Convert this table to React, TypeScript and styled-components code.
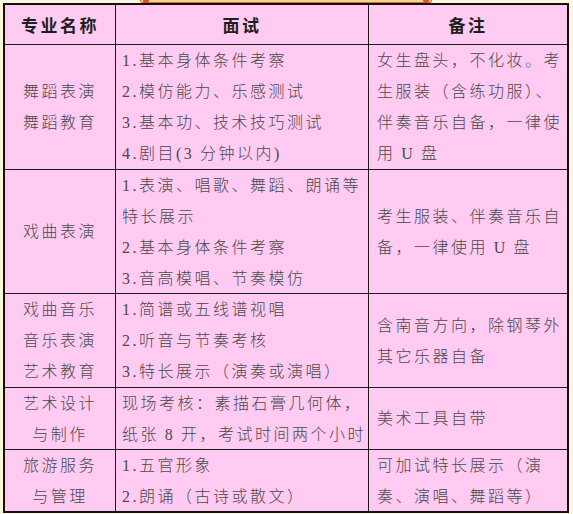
import React, { FC } from 'react'
import styled, { createGlobalStyle } from 'styled-components'

const GlobalStyle = createGlobalStyle`
  html, body {
    margin: 0;
    padding: 0;
    background: #fef7de;
  }
`

const Page = styled.div`
  padding: 0 0 0 3px;
  width: 566px;
`

const Banner = styled.div`
  position: relative;
  margin-left: 137px;
  width: 290px;
  height: 2px;
  background: #fbd391;
  border-bottom: 1px solid #c4732a;
  border-left: 1px solid #c4732a;
  border-right: 1px solid #c4732a;
  border-radius: 0 0 3px 3px;

  &::before,
  &::after {
    content: '';
    position: absolute;
    top: -3px;
    width: 6px;
    height: 6px;
    border-radius: 50%;
    background: #e04a1e;
  }
  &::before { left: 2px; }
  &::after { right: 2px; }
`

const Table = styled.div`
  display: grid;
  grid-template-columns: 110px 252px 198px;
  grid-template-rows: 39px 124px 123px 93px 61px 61px;
  gap: 1px;
  background: #1a1a1a;
  border: 2px solid #111;
  font-family: "Liberation Serif", "Noto Sans CJK SC", serif;
`

const Head = styled.div`
  display: flex;
  align-items: center;
  justify-content: center;
  background: #ffcbf3;
  color: #1e1e1e;
  font-family: "Noto Sans CJK SC", sans-serif;
  font-weight: 700;
  font-size: 17px;
  letter-spacing: 2.5px;
`

const Cell = styled.div<{ $center?: boolean; $pad?: number }>`
  display: flex;
  flex-direction: column;
  justify-content: center;
  align-items: ${(p) => (p.$center ? 'center' : 'flex-start')};
  padding-left: ${(p) => p.$pad || 0}px;
  background: #ffcbf3;
  color: #4a4a4a;
  font-size: 16px;
  font-weight: 300;
  letter-spacing: 2.5px;
  white-space: nowrap;
  overflow: hidden;
`

const Line = styled.div`
  line-height: 31px;
`

const Dot = styled.span`
  color: #4a5cd8;
`

type Row = {
  name: string[]
  exam: string[]
  note: React.ReactNode[]
}

const rows: Row[] = [
  {
    name: ['舞蹈表演', '舞蹈教育'],
    exam: ['1.基本身体条件考察', '2.模仿能力、乐感测试', '3.基本功、技术技巧测试', '4.剧目(3\u2009分钟以内)'],
    note: [
      <>女生盘头，不化妆<Dot>。</Dot>考</>,
      '生服装（含练功服）、',
      '伴奏音乐自备，一律使',
      '用\u2009U\u2009盘',
    ],
  },
  {
    name: ['戏曲表演'],
    exam: ['1.表演、唱歌、舞蹈、朗诵等', '特长展示', '2.基本身体条件考察', '3.音高模唱、节奏模仿'],
    note: ['考生服装、伴奏音乐自', '备，一律使用\u2009U\u2009盘'],
  },
  {
    name: ['戏曲音乐', '音乐表演', '艺术教育'],
    exam: ['1.简谱或五线谱视唱', '2.听音与节奏考核', '3.特长展示（演奏或演唱）'],
    note: ['含南音方向，除钢琴外', '其它乐器自备'],
  },
  {
    name: ['艺术设计', '与制作'],
    exam: ['现场考核：素描石膏几何体，', '纸张\u20098\u2009开，考试时间两个小时'],
    note: ['美术工具自带'],
  },
  {
    name: ['旅游服务', '与管理'],
    exam: ['1.五官形象', '2.朗诵（古诗或散文）'],
    note: ['可加试特长展示（演', '奏、演唱、舞蹈等）'],
  },
]

const App: FC = () => {
  return (
    <>
      <GlobalStyle />
      <Page>
        <Banner />
        <Table>
          <Head>专业名称</Head>
          <Head>面试</Head>
          <Head>备注</Head>
          {rows.map((row, i) => (
            <React.Fragment key={i}>
              <Cell $center>
                {row.name.map((l, j) => <Line key={j}>{l}</Line>)}
              </Cell>
              <Cell $pad={6}>
                {row.exam.map((l, j) => <Line key={j}>{l}</Line>)}
              </Cell>
              <Cell $pad={8}>
                {row.note.map((l, j) => <Line key={j}>{l}</Line>)}
              </Cell>
            </React.Fragment>
          ))}
        </Table>
      </Page>
    </>
  )
}

export default App
